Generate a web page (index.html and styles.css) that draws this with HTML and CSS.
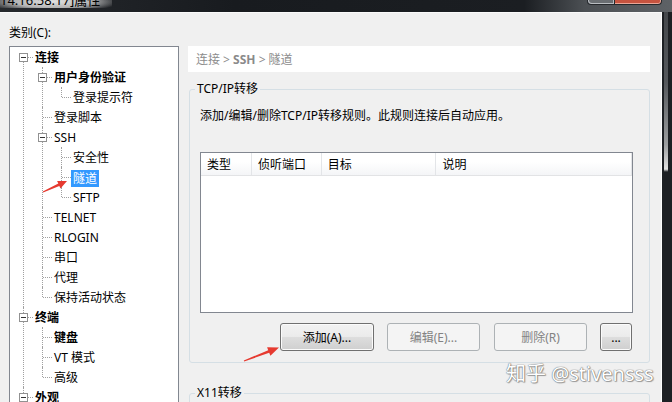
FILE: index.html
```html
<!DOCTYPE html>
<html lang="zh-CN">
<head>
<meta charset="utf-8">
<title>属性</title>
<link rel="stylesheet" href="styles.css">
</head>
<body>
<div class="window">
  <div class="titlebar">
    <div class="title">14.16.58.17]属性</div>
    <div class="caps"><span class="cap min"></span><span class="cap close"></span></div>
  </div>
  <div class="main">
    <div class="dialog">
      <div class="left">
        <div class="label">类别(C):</div>
        <div class="tree">
          <ul>
            <li><div class="row b"><span class="exp"></span><span class="txt">连接</span></div>
              <ul>
                <li><div class="row b"><span class="exp"></span><span class="txt">用户身份验证</span></div>
                  <ul>
                    <li><div class="row"><span class="txt">登录提示符</span></div></li>
                  </ul>
                </li>
                <li><div class="row"><span class="txt">登录脚本</span></div></li>
                <li><div class="row"><span class="exp"></span><span class="txt">SSH</span></div>
                  <ul>
                    <li><div class="row"><span class="txt">安全性</span></div></li>
                    <li><div class="row sel"><span class="txt">隧道</span></div></li>
                    <li><div class="row"><span class="txt">SFTP</span></div></li>
                  </ul>
                </li>
                <li><div class="row"><span class="txt">TELNET</span></div></li>
                <li><div class="row"><span class="txt">RLOGIN</span></div></li>
                <li><div class="row"><span class="txt">串口</span></div></li>
                <li><div class="row"><span class="txt">代理</span></div></li>
                <li><div class="row"><span class="txt">保持活动状态</span></div></li>
              </ul>
            </li>
            <li><div class="row b"><span class="exp"></span><span class="txt">终端</span></div>
              <ul>
                <li><div class="row b"><span class="txt">键盘</span></div></li>
                <li><div class="row"><span class="txt">VT 模式</span></div></li>
                <li><div class="row"><span class="txt">高级</span></div></li>
              </ul>
            </li>
            <li><div class="row b"><span class="exp"></span><span class="txt">外观</span></div></li>
          </ul>
        </div>
      </div>
      <div class="right">
        <div class="crumb">连接 &gt; <b>SSH</b> &gt; 隧道</div>
        <fieldset class="group">
          <legend>TCP/IP转移</legend>
          <p class="desc">添加/编辑/删除TCP/IP转移规则。此规则连接后自动应用。</p>
          <div class="list">
            <div class="lhead">
              <div class="c1">类型</div>
              <div class="c2">侦听端口</div>
              <div class="c3">目标</div>
              <div class="c4">说明</div>
            </div>
          </div>
          <div class="btns">
            <div class="btn add">添加(A)...</div>
            <div class="btn dis">编辑(E)...</div>
            <div class="btn dis del">删除(R)</div>
            <div class="btn more">...</div>
          </div>
        </fieldset>
        <fieldset class="group x11">
          <legend>X11转移</legend>
        </fieldset>
      </div>
    </div>
    <div class="frame-right"></div>
  </div>

  <svg class="arrows" width="672" height="402" viewBox="0 0 672 402">
    <polygon points="42.8,191.6 43.2,192.4 59.3,185.9 60.5,188.4 67,181 57.1,181.1 58.3,183.6" fill="#e63a30"/>
    <polygon points="243.8,360.5 244.2,361.5 269.2,352.8 270.4,355.7 279,347.5 267.1,347.3 268.2,350.2" fill="#e63a30"/>
  </svg>
  <div class="wm">知乎 @stivensss</div>
</div>
</body>
</html>
```
FILE: styles.css
```css
* { box-sizing: border-box; }
html, body { margin: 0; padding: 0; }
body {
  width: 672px;
  height: 402px;
  overflow: hidden;
  background: #f0f0f0;
  color: #000;
  font-family: "Noto Sans", "Noto Sans CJK SC", sans-serif;
  font-size: 12px;
  line-height: 16px;
}
.window {
  position: relative;
  width: 672px;
  height: 402px;
  display: flex;
  flex-direction: column;
  overflow: hidden;
}

/* title bar */
.titlebar {
  height: 12px;
  flex: none;
  display: flex;
  justify-content: space-between;
  overflow: hidden;
  background: linear-gradient(to right, #26292d 0%, #181b1f 35%, #1b1e22 78%, #4c5054 87%, #5e6266 100%);
}
.title {
  align-self: flex-start;
  margin: -8px 0 0 -7px;
  padding: 0 12px 0 7px;
  font-size: 13px;
  line-height: 16px;
  white-space: nowrap;
  color: #000;
  background: radial-gradient(ellipse at 50% 60%, rgba(232,232,232,0.97) 0%, rgba(205,205,205,0.85) 45%, rgba(40,44,48,0) 80%);
}
.caps {
  display: flex;
  align-self: flex-start;
  margin-right: 10px;
}
.cap {
  height: 5px;
  border: 1px solid #25282c;
  border-top: none;
}
.cap.min {
  width: 28px;
  background: #6a6e72;
  border-radius: 0 0 0 4px;
  box-shadow: inset 1px -1px 0 #b8bcc0, inset -1px 0 0 #b8bcc0;
}
.cap.close {
  width: 47px;
  background: #c6533f;
  border-left: none;
  border-radius: 0 0 4px 0;
  box-shadow: inset 0 -1px 0 #e9a596, inset -1px 0 0 #e9a596;
}

/* main */
.main {
  flex: 1;
  display: flex;
  min-height: 0;
}
.dialog {
  flex: 1;
  display: flex;
  gap: 9px;
  padding-left: 9px;
  border-top: 1px solid #fafafa;
  border-right: 1px solid #fdfdfd;
  overflow: hidden;
  min-width: 0;
}
.frame-right {
  width: 10px;
  flex: none;
  border-left: 2px solid #1d2024;
  border-right: 4px solid #1d2024;
  background: linear-gradient(#44474b 0%, #55585c 18%, #9c9ea0 34%, #e2e2e2 40.3%, #1d2024 41%, #1d2024 100%);
}

/* left column */
.left {
  width: 170px;
  flex: none;
  display: flex;
  flex-direction: column;
  padding-top: 12px;
}
.label {
  line-height: 16px;
  margin-bottom: 5px;
}
.tree {
  flex: 1;
  min-height: 0;
  background: #fff;
  border: 1px solid #828790;
  border-bottom: none;
  overflow: hidden;
}
.tree ul {
  list-style: none;
  margin: 0;
  padding: 0;
}
.tree ul ul { margin-left: 19px; }
.tree li { position: relative; }
.tree li::before {
  content: "";
  position: absolute;
  left: 13px;
  top: 0;
  bottom: 0;
  border-left: 1px dotted #a0a0a0;
}
.tree li:last-child::before {
  bottom: auto;
  height: 10px;
}
.tree > ul > li:first-child::before { top: 10px; }
.tree > ul > li:last-child::before { top: 0; height: auto; bottom: 0; }
.row {
  position: relative;
  height: 20px;
  display: flex;
  align-items: center;
  padding-left: 25px;
  padding-top: 2px;
  white-space: nowrap;
}
.row::before {
  content: "";
  position: absolute;
  left: 14px;
  top: 10px;
  width: 9px;
  border-top: 1px dotted #a0a0a0;
}
.row.b .txt { font-weight: bold; }
.row.sel .txt {
  background: #3399ff;
  color: #fff;
  margin-left: -2px;
  padding: 0 2px;
  line-height: 17px;
}
.exp {
  position: absolute;
  left: 9px;
  top: 6px;
  width: 9px;
  height: 9px;
  border: 1px solid #919191;
  background: #fff;
  z-index: 1;
}
.exp::after {
  content: "";
  position: absolute;
  left: 1px;
  top: 3px;
  width: 5px;
  height: 1px;
  background: #333;
}

/* right column */
.right {
  width: 462px;
  flex: none;
  padding-top: 33px;
}
.crumb {
  height: 26px;
  background: #fff;
  padding: 2px 0 0 8px;
  line-height: 24px;
  color: #8c8c8c;
  white-space: nowrap;
}
.crumb b { color: #8a8a8a; }
.group {
  margin: 9px 0 0 1px;
  width: 461px;
  min-width: 0;
  border: 1px solid #d5dfe5;
  border-radius: 3px;
  padding: 0 16px 11px 10px;
}
.group legend {
  margin-left: -5px;
  padding: 0 2px;
  line-height: 16px;
}
.desc {
  margin: 11px 0 0 0;
  line-height: 16px;
  white-space: nowrap;
}
.list {
  margin-top: 28px;
  height: 161px;
  background: #fff;
  border: 1px solid #828790;
}
.lhead {
  display: flex;
  height: 23px;
  border-bottom: 1px solid #e2e3e5;
  background: linear-gradient(#ffffff 0%, #ffffff 40%, #f4f5f7 100%);
}
.lhead div {
  border-right: 1px solid #e3e5e8;
  padding: 2px 0 0 6px;
  line-height: 20px;
  white-space: nowrap;
}
.c1 { width: 51px; }
.c2 { width: 70px; }
.c3 { width: 115px; }
.c4 { width: 196px; }

.btns {
  display: flex;
  justify-content: flex-end;
  margin-top: 10px;
  padding-right: 1px;
}
.btn {
  height: 28px;
  width: 93px;
  display: flex;
  align-items: center;
  justify-content: center;
  padding-top: 2px;
  border: 1px solid #707070;
  border-radius: 3px;
  background: linear-gradient(#f2f2f2 0%, #ebebeb 48%, #dddddd 52%, #cfcfcf 100%);
  box-shadow: inset 0 0 0 1px #fbfbfb;
  white-space: nowrap;
}
.btn + .btn { margin-left: 13px; }
.btn.del { margin-left: 14px; }
.btn.add { width: 94px; }
.btn.more { width: 32px; }
.btn.dis {
  border-color: #adb2b5;
  background: #f4f4f4;
  box-shadow: none;
  color: #838383;
}
.group.x11 {
  margin-top: 22px;
  height: 40px;
  padding-bottom: 0;
}

/* overlays */
.arrows {
  position: absolute;
  left: 0;
  top: 0;
  pointer-events: none;
}
.wm {
  position: absolute;
  left: 506px;
  top: 361px;
  font-size: 20px;
  line-height: 26px;
  color: #ffffff;
  white-space: nowrap;
  text-shadow: 0 0 1px #6f6f6f, 0 0 1px #6f6f6f, 1px 1px 1px #a0a0a0;
}
```
